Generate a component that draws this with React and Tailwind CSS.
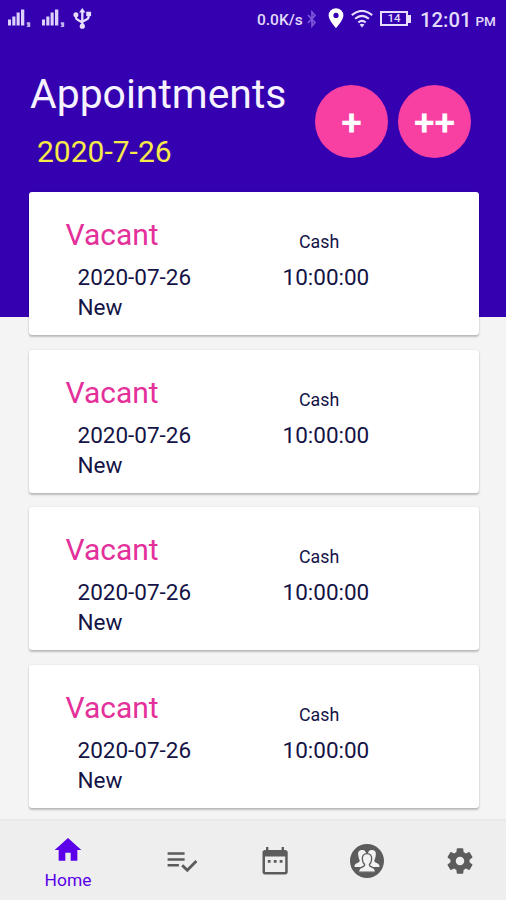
import React from 'react';

const appointments = [1, 2, 3, 4].map((id) => ({
  id,
  title: 'Vacant',
  date: '2020-07-26',
  status: 'New',
  payment: 'Cash',
  time: '10:00:00',
}));

function Signal() {
  return (
    <svg className="block h-5 w-6 shrink-0" viewBox="0 0 24 20" fill="#dcd2fa">
      <path d="M0 10.5h3v6H0zM4.3 7.5h3.1v9H4.3zM8.6 3.5h3.1v13H8.6zM13 .5h3.3v16H13z" />
      <path d="M18.8 13.3h3.4v4.7h-3.4v-1.2h1v-1h-1z" opacity=".85" />
    </svg>
  );
}

function Usb() {
  return (
    <svg className="block h-[22px] w-5 shrink-0" viewBox="0 0 20 22" fill="none" stroke="#e6defc" strokeWidth="2.3">
      <path d="M9.3 4v14M3 7v2.5q0 1.5 1.7 2.2l4.6 2.8M15.6 6v2.8q0 1.6-1.6 2.4l-4.7 2.6" />
      <path d="M9.3 0l3.2 4.6H6.1z" fill="#e6defc" stroke="none" />
      <circle cx="2.9" cy="6.8" r="2.5" fill="#e6defc" stroke="none" />
      <path d="M13.2 3.7h4.9v4.4h-4.9z" fill="#e6defc" stroke="none" />
      <circle cx="9.3" cy="18.2" r="2.6" fill="#e6defc" stroke="none" />
    </svg>
  );
}

function StatusBar() {
  return (
    <div className="flex h-[37px] items-center text-[#e2daf9]">
      <div className="flex w-[257px] items-center pl-2">
        <Signal />
        <div className="w-[10px]" />
        <Signal />
        <div className="w-[7px]" />
        <Usb />
      </div>
      <span className="w-[49px] text-[15.5px] font-medium leading-5 whitespace-nowrap pt-0.5">0.0K/s</span>
      <svg className="block h-[18px] w-3 shrink-0" viewBox="0 0 12 18" fill="none" stroke="#7a55d8" strokeWidth="1.7">
        <path d="M2 5l7 7.6L6 16V2l3 3.4L2 13" />
      </svg>
      <svg className="ml-[10px] block h-[21px] w-4 shrink-0" viewBox="0 0 16 21">
        <path fillRule="evenodd" fill="#fff" d="M8 .2A7.4 7.4 0 0 0 .6 7.6C.6 12.2 8 20.2 8 20.2s7.4-8 7.4-12.6A7.4 7.4 0 0 0 8 .2zm0 4.6a2.6 2.6 0 1 1 0 5.2 2.6 2.6 0 0 1 0-5.2z" />
      </svg>
      <svg className="ml-[7px] block h-[18px] w-[22px] shrink-0" viewBox="0 0 22 18" fill="none" stroke="#e6defc" strokeWidth="2.1">
        <path d="M.8 5.1Q11-3.3 21.2 5.1M4.1 8.8q6.9-6 13.8 0M7.3 12.5q3.7-3.2 7.4 0" />
        <path d="M8.6 14.4q2.4-1.2 4.8 0L11 17.5z" fill="#e6defc" stroke="none" />
      </svg>
      <div className="ml-[7px] flex h-[15px] w-[28px] items-center justify-center border-2 border-[#e6defc] pt-px text-[11.5px] font-medium leading-none">
        14
      </div>
      <div className="h-2 w-[3px] bg-[#e6defc]" />
      <span className="ml-[9px] pt-0.5 text-[20.3px] font-medium leading-6 whitespace-nowrap">12:01</span>
      <span className="ml-[4px] text-[13.5px] font-medium leading-5 pt-[5px]">PM</span>
    </div>
  );
}

function AddButton({ label }) {
  return (
    <button className="flex size-[73px] items-center justify-center rounded-full bg-[#f840a3] pt-0.5 text-[37.5px] font-semibold leading-none text-white">
      {label}
    </button>
  );
}

function Card({ item }) {
  return (
    <article className="flex h-[143px] w-[450px] rounded-[3px] bg-white pt-[25px] pl-[37px] text-[22.5px] leading-[30.3px] text-[#141345] shadow-[0_2px_2px_rgba(0,0,0,0.22),0_0_2px_rgba(0,0,0,0.12)]">
      <div className="w-[217px]">
        <h2 className="mb-[9px] text-[30px] leading-9 text-[#e4309a]">{item.title}</h2>
        <p className="pl-3">{item.date}</p>
        <p className="pl-3">{item.status}</p>
      </div>
      <div className="pt-[10px]">
        <p className="mb-[5px] pl-[16.5px] text-[17.8px]">{item.payment}</p>
        <p>{item.time}</p>
      </div>
    </article>
  );
}

function BottomNav() {
  return (
    <nav className="flex h-[81px] items-center border-t-2 border-[#e9e9e9] bg-[#eeeeee] text-[#5c5c5c]">
      <div className="flex w-[136px] flex-col items-center pt-[5px] text-[#5b00e8]">
        <svg className="block size-8" viewBox="0 0 24 24" fill="currentColor">
          <path d="M10 20v-6h4v6h5v-8h3L12 3 2 12h3v8z" />
        </svg>
        <span className="mt-[2px] text-[17.4px] leading-6">Home</span>
      </div>
      <div className="flex w-[92px] justify-center">
        <svg className="block size-8" viewBox="0 0 32 32" fill="none" stroke="currentColor">
          <path d="M1.6 8.4h17M1.6 14.4h17M1.6 20.3h11.3" strokeWidth="2.5" />
          <path d="M16.2 20.2l5.1 5.1 9.1-9.2" strokeWidth="2.9" />
        </svg>
      </div>
      <div className="flex w-[93px] justify-center">
        <svg className="block size-8" viewBox="0 0 32 32" fill="currentColor">
          <path fillRule="evenodd" d="M7 2h2.4v3h13.2V2H25v3h1.1a2.6 2.6 0 0 1 2.6 2.6v19.2a2.6 2.6 0 0 1-2.6 2.6H6.1a2.6 2.6 0 0 1-2.6-2.6V7.6A2.6 2.6 0 0 1 6.1 5H7zM6 11.5v15.6h20.2V11.5z" />
          <path d="M8.8 15h2.8v2.8H8.8zM14.8 15h2.8v2.8h-2.8zM20.7 15h2.8v2.8h-2.8z" />
        </svg>
      </div>
      <div className="flex w-[93px] justify-center">
        <svg className="mr-px block size-[34px]" viewBox="0 0 34 34">
          <circle cx="17" cy="17" r="17" fill="#5c5c5c" />
          <g fill="#f2f2f2">
            <path d="M8.3 11.6C7.6 8 9 5.9 12 5.9s4.5 2 4 5.5l-.8 5.2-1 5-3 1.3H4.5c0-2.2.6-3.2 2.8-4 1.7-.7 2.5-1.2 2.4-2.7-.8-1.1-1.2-2.7-1.4-4.6z" />
            <path d="M25.7 11.6C26.4 8 25 5.9 22 5.9s-4.5 2-4 5.5l.8 5.2 1 5 3 1.3h6.7c0-2.2-.6-3.2-2.8-4-1.7-.7-2.5-1.2-2.4-2.7.8-1.1 1.2-2.7 1.4-4.6z" />
            <path d="M12.4 15.6c-.5-4 1.4-6 4.6-6s5.1 2 4.6 6c-.3 2.4-1.1 4-2.2 5-.1 1.6.8 2 2.9 2.7 2.4.8 3.2 2 3.3 4.9H8.4c.1-2.9.9-4.1 3.3-4.9 2.1-.7 3-1.1 2.9-2.7-1.1-1-1.9-2.6-2.2-5z" stroke="#5c5c5c" strokeWidth="1.3" />
          </g>
        </svg>
      </div>
      <div className="flex w-[92px] justify-center">
        <svg className="block size-8" viewBox="0 0 24 24" fill="currentColor">
          <path d="M19.14 12.94c.04-.3.06-.61.06-.94 0-.32-.02-.64-.07-.94l2.03-1.58a.49.49 0 0 0 .12-.61l-1.92-3.32a.488.488 0 0 0-.59-.22l-2.39.96c-.5-.38-1.03-.7-1.62-.94l-.36-2.54a.484.484 0 0 0-.48-.41h-3.84c-.24 0-.43.17-.47.41l-.36 2.54c-.59.24-1.13.57-1.62.94l-2.39-.96c-.22-.08-.47 0-.59.22L2.74 8.87c-.12.21-.08.47.12.61l2.03 1.58c-.05.3-.09.63-.09.94s.02.64.07.94l-2.03 1.58a.49.49 0 0 0-.12.61l1.92 3.32c.12.22.37.29.59.22l2.39-.96c.5.38 1.03.7 1.62.94l.36 2.54c.05.24.24.41.48.41h3.84c.24 0 .44-.17.47-.41l.36-2.54c.59-.24 1.13-.56 1.62-.94l2.39.96c.22.08.47 0 .59-.22l1.92-3.32c.12-.22.07-.47-.12-.61l-2.01-1.58zM12 15.2c-1.77 0-3.2-1.43-3.2-3.2s1.43-3.2 3.2-3.2 3.2 1.43 3.2 3.2-1.43 3.2-3.2 3.2z" />
        </svg>
      </div>
    </nav>
  );
}

export default function App() {
  return (
    <div className="flex h-[900px] w-[506px] flex-col overflow-hidden bg-[#f4f4f4] font-[Roboto,sans-serif]">
      <header className="h-[317px] shrink-0 bg-[#3400b0]">
        <StatusBar />
        <div className="flex pt-8">
          <div className="w-[315px] pl-[30px]">
            <h1 className="pt-px text-[40.9px] leading-[48px] whitespace-nowrap text-[#f6f2ff]">Appointments</h1>
            <p className="mt-4 pl-[7px] text-[30px] leading-9 text-[#f7ea48]">2020-7-26</p>
          </div>
          <div className="flex gap-[10px] pt-4">
            <AddButton label="+" />
            <AddButton label="++" />
          </div>
        </div>
      </header>
      <main className="-mt-[125px] flex flex-1 flex-col gap-[14.5px] pl-[28.5px]">
        {appointments.map((item) => (
          <Card key={item.id} item={item} />
        ))}
      </main>
      <BottomNav />
    </div>
  );
}
